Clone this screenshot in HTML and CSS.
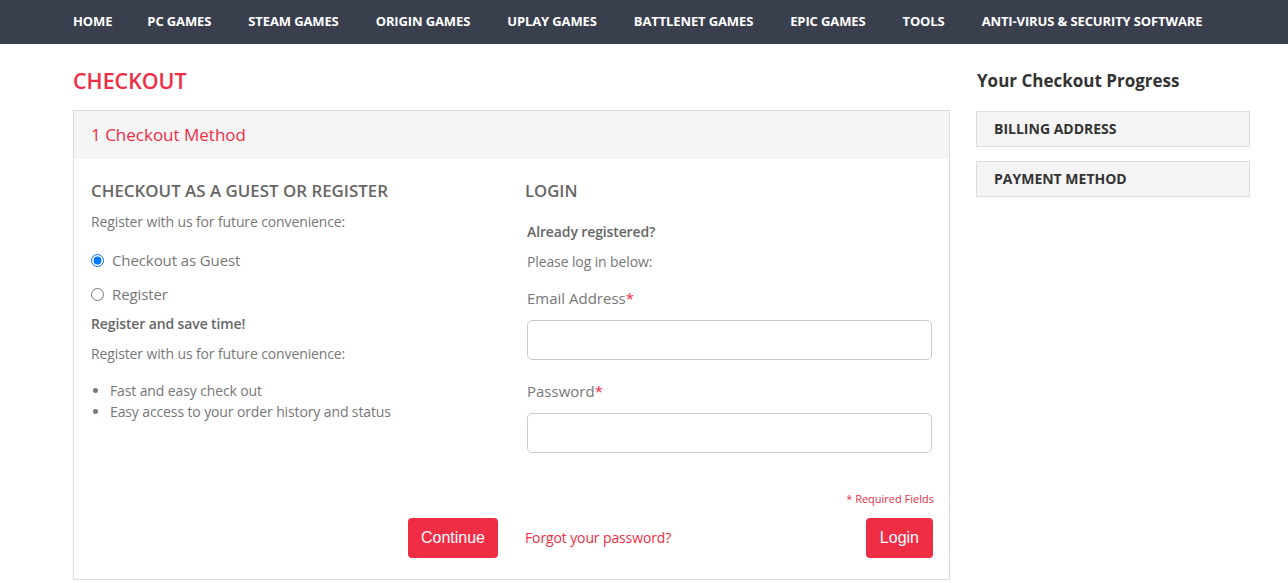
FILE: index.html
```html
<!DOCTYPE html>
<html>
<head>
<meta charset="utf-8">
<title>Checkout</title>
<link rel="stylesheet" href="styles.css">
</head>
<body>
<nav class="topnav">
  <ul class="menu">
    <li class="first">HOME</li>
    <li>PC GAMES</li>
    <li>STEAM GAMES</li>
    <li>ORIGIN GAMES</li>
    <li>UPLAY GAMES</li>
    <li>BATTLENET GAMES</li>
    <li>EPIC GAMES</li>
    <li>TOOLS</li>
    <li>ANTI-VIRUS &amp; SECURITY SOFTWARE</li>
  </ul>
</nav>
<div class="page">
  <main class="main">
    <h1 class="page-title">CHECKOUT</h1>
    <section class="step">
      <div class="step-head">1 Checkout Method</div>
      <div class="step-body">
        <div class="col col-left">
          <h2 class="col-title">CHECKOUT AS A GUEST OR REGISTER</h2>
          <p class="txt m10">Register with us for future convenience:</p>
          <label class="radio r1"><input type="radio" name="m" checked> <span>Checkout as Guest</span></label>
          <label class="radio r2"><input type="radio" name="m"> <span>Register</span></label>
          <p class="txt bold m10">Register and save time!</p>
          <p class="txt m10">Register with us for future convenience:</p>
          <ul class="bullets">
            <li>Fast and easy check out</li>
            <li>Easy access to your order history and status</li>
          </ul>
        </div>
        <div class="col col-right">
          <h2 class="col-title login-title">LOGIN</h2>
          <p class="txt bold m20">Already registered?</p>
          <p class="txt m10">Please log in below:</p>
          <label class="field-label m15">Email Address<em>*</em></label>
          <div class="input"></div>
          <label class="field-label m20">Password<em>*</em></label>
          <div class="input"></div>
          <p class="required">* Required Fields</p>
        </div>
        <div class="actions-left">
          <button class="btn btn-continue">Continue</button>
        </div>
        <div class="actions-right">
          <a class="forgot">Forgot your password?</a>
          <button class="btn">Login</button>
        </div>
      </div>
    </section>
  </main>
  <aside class="sidebar">
    <h3 class="side-title">Your Checkout Progress</h3>
    <div class="side-item">BILLING ADDRESS</div>
    <div class="side-item">PAYMENT METHOD</div>
  </aside>
</div>
</body>
</html>
```
FILE: styles.css
```css
* { box-sizing: border-box; }
html, body { margin: 0; padding: 0; }
body {
  font-family: "Open Sans", "Noto Sans", sans-serif;
  background: #fff;
  color: #777;
}
.topnav {
  background: #3a3f4e;
  height: 44px;
}
.menu {
  list-style: none;
  margin: 0;
  padding: 0 0 2px 73px;
  display: flex;
  gap: 37px;
  height: 44px;
  align-items: center;
}
.menu li {
  color: #fff;
  font-weight: 700;
  font-size: 13px;
  line-height: 18px;
  letter-spacing: -0.12px;
}
.menu li.first { margin-right: -2px; }
.page {
  display: flex;
  padding-left: 73px;
  gap: 26px;
}
.main { width: 877px; padding-top: 22px; }
.page-title {
  margin: 0 0 14px;
  color: #ef2d45;
  font-size: 21.4px;
  font-weight: 600;
  line-height: 30px;
}
.step {
  border: 1px solid #ddd;
  box-shadow: 0 1px 1px rgba(0,0,0,0.06);
}
.step-head {
  background: #f5f5f5;
  height: 48px;
  line-height: 48px;
  padding-left: 17px;
  color: #ef2d45;
  font-size: 17px;
}
.step-body {
  display: grid;
  grid-template-columns: 407px 405px;
  column-gap: 29px;
  row-gap: 12px;
  padding: 21px 18px 21px 17px;
}
.col-title {
  margin: 0;
  font-size: 16.9px;
  font-weight: 600;
  line-height: 22px;
  color: #666;
}
.login-title { margin-left: -2px; font-size: 16.7px; }
.txt {
  margin: 0;
  font-size: 14px;
  line-height: 20px;
  color: #777;
  letter-spacing: -0.12px;
}
.bold { font-weight: 600; color: #666; }
.m10 { margin-top: 10px; }
.m15 { margin-top: 15px; }
.m20 { margin-top: 20px; }
.radio {
  display: flex;
  align-items: center;
  font-size: 15px;
  line-height: 20px;
  color: #777;
  letter-spacing: -0.1px;
}
.radio input { margin: 0 8px 0 0; width: 13px; height: 13px; }
.r1 { margin-top: 18px; }
.r2 { margin-top: 14px; }
.bullets {
  margin: 16px 0 0;
  padding-left: 19px;
  font-size: 14px;
  line-height: 21px;
  color: #777;
  letter-spacing: -0.12px;
}
.field-label {
  display: block;
  font-size: 15px;
  line-height: 22px;
  color: #777;
}
.field-label em { color: #ef2d45; font-style: normal; }
.input {
  margin-top: 11px;
  height: 40px;
  border: 1px solid #ccc;
  border-radius: 5px;
  background: #fff;
}
.required {
  margin: 39px -2px 0 0;
  text-align: right;
  color: #ef2d45;
  font-size: 11px;
  line-height: 14px;
}
.actions-left { display: flex; justify-content: flex-end; }
.actions-right {
  display: flex;
  justify-content: space-between;
  align-items: center;
  margin-left: -2px;
  margin-right: -1px;
}
.btn {
  background: #ef2d45;
  color: #fff;
  border: none;
  border-radius: 4px;
  height: 40px;
  padding: 0 14px;
  font-family: "Liberation Sans", Arial, sans-serif;
  font-size: 16px;
}
.btn-continue { padding: 0 13px; }
.forgot {
  color: #ef2d45;
  font-size: 14px;
  line-height: 20px;
  letter-spacing: -0.12px;
}
.sidebar { width: 274px; padding-top: 25px; }
.side-title {
  margin: 0 0 18px;
  font-size: 17px;
  font-weight: 700;
  line-height: 24px;
  color: #333;
  padding-left: 1px;
}
.side-item {
  height: 36px;
  line-height: 34px;
  border: 1px solid #ddd;
  background: #f4f4f4;
  padding-left: 17px;
  font-size: 14px;
  font-weight: 700;
  color: #333;
  margin-bottom: 14px;
}
```
